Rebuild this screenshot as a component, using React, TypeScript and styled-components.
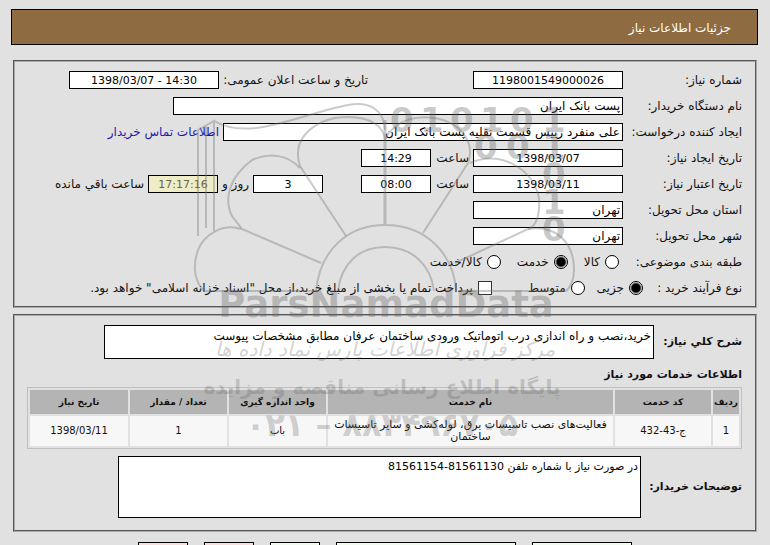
import React from "react";
import styled, { createGlobalStyle, css } from "styled-components";

const GlobalStyle = createGlobalStyle`
  *, *::before, *::after { box-sizing: border-box; }
  body { margin: 0; background: #e1e1e1; }
`;

const Page = styled.main`
  position: relative;
  height: 100vh;
  overflow: hidden;
  padding: 9px 12px 0 11px;
  background: #e1e1e1;
  color: #111;
  font: 12px/20px "DejaVu Sans", sans-serif;
`;

const TitleBar = styled.header`
  height: 36px;
  padding: 0 26px;
  border: 1px solid #000;
  background: #8e6b40;
  color: #fff;
  line-height: 36px;
`;

const Panel = styled.section<{ $gap: number; $bottom: number }>`
  margin: ${(p) => p.$gap}px 1px 0 2px;
  padding: 9px 13px ${(p) => p.$bottom}px 12px;
  border: 2px groove #aaa;
`;

const Rows = styled.div`
  display: flex;
  flex-direction: column;
  gap: 8px;
`;

const Row = styled.div`
  display: flex;
  align-items: center;
  height: 18px;
  gap: 4px;
  line-height: 22px;
  white-space: nowrap;
`;

const Label = styled.label`
  flex: 0 0 115px;
`;

const GroupLabel = styled.span<{ $width: number }>`
  flex: 0 0 ${(p) => p.$width}px;
`;

const Field = styled.input<{ $width: number; $number?: boolean; $muted?: boolean }>`
  width: ${(p) => p.$width}px;
  height: 18px;
  padding: 0 2px;
  border: 1px solid #000;
  border-radius: 0;
  background: #fff;
  color: #000;
  font: inherit;
  line-height: 16px;
  ${(p) => p.$number && css`
    font-size: 11px;
    text-align: center;
  `}
  ${(p) => p.$muted && css`
    background: #efecc8;
    color: #68664c;
  `}
`;

const Unit = styled.label<{ $width: number }>`
  flex: 0 0 ${(p) => p.$width}px;
`;

const Spacer = styled.span<{ $width: number }>`
  flex: 0 0 ${(p) => p.$width}px;
`;

const ContactLink = styled.a`
  color: #1a1aae;
  text-decoration: none;
`;

const Choice = styled.label<{ $after: number }>`
  display: flex;
  align-items: center;
  gap: 5px;
  margin-left: ${(p) => p.$after}px;
`;

const Radio = styled.input.attrs({ type: "radio" })`
  appearance: none;
  width: 14px;
  height: 14px;
  margin: 0;
  border: 1px solid #000;
  border-radius: 50%;
  background: #fff;
  &:checked { background: radial-gradient(circle, #000 4px, #fff 6px); }
`;

const Check = styled.input.attrs({ type: "checkbox" })`
  appearance: none;
  width: 14px;
  height: 14px;
  margin: 0;
  border: 1px solid #333;
  background: #fff;
  &:checked { background: #000; }
`;

const TextRow = styled.div<{ $end: number }>`
  display: flex;
  align-items: center;
  gap: 5px;
  padding-left: ${(p) => p.$end}px;
`;

const StrongLabel = styled.label<{ $width: number }>`
  flex: 0 0 ${(p) => p.$width}px;
  font-size: 11px;
  font-weight: bold;
  white-space: nowrap;
`;

const TextArea = styled.textarea<{ $height: number; $size: number }>`
  flex: 1;
  min-width: 0;
  height: ${(p) => p.$height}px;
  padding: 1px 2px;
  border: 1px solid #000;
  border-radius: 0;
  background: #fff;
  color: #000;
  font: inherit;
  font-size: ${(p) => p.$size}px;
  line-height: 18px;
  resize: none;
`;

const Heading = styled.h2`
  margin: 7px 0 3px;
  font-size: 11px;
  line-height: 18px;
`;

const Services = styled.table`
  width: 100%;
  margin-bottom: 7px;
  table-layout: fixed;
  border: 1px solid #c0c0c0;
  border-spacing: 2px;
  font-size: 10px;
  line-height: 12px;
  text-align: center;
  th, td { padding: 0; }
  th { height: 24px; background: #b4b4b4; color: #111; font-size: 9px; }
  td { height: 30px; background: #f7f7f7; }
  td:nth-child(3) { font-size: 11px; }
`;

const Col = styled.col<{ $width?: number }>`
  width: ${(p) => (p.$width ? `${p.$width}px` : "auto")};
`;

const Actions = styled.footer`
  display: flex;
  gap: 16px;
  margin: 10px 126px 0;
`;

const Action = styled.button<{ $width: number; $danger?: boolean }>`
  width: ${(p) => p.$width}px;
  height: 24px;
  padding: 0;
  border: 1px solid #000;
  background: ${(p) => (p.$danger ? "#fbdcdc" : "#effbe9")};
`;

const Watermark = styled.svg`
  position: absolute;
  top: 90px;
  left: 190px;
  width: 400px;
  height: 360px;
  pointer-events: none;
`;

function Mark() {
  return (
    <Watermark viewBox="0 0 400 360" aria-hidden="true" direction="ltr">
      <g fill="none" stroke="#777" strokeOpacity="0.38" strokeWidth="2">
        <path d="M8 146V40l16-9v110M16 138V36M24 31C60 52 110 24 158 15C180 11 194 20 195 40" />
        <path d="M195 30V134" strokeWidth="3" />
        <path d="M156 146L110 76C100 45 130 27 158 27C180 27 194 36 195 50" />
        <path d="M110 78C98 65 80 62 62 70C38 88 34 110 42 126L52 139L131 173" />
        <path d="M51 139C32 133 14 145 8 160C1 180 7 194 14 201H128" />
        <path d="M195 50C205 25 245 20 268 38C281 50 282 62 278 73L233 143" />
        <path d="M280 73C310 60 343 78 349 108C350 126 347 136 338 139L265 173" />
        <path d="M338 139C365 135 384 151 384 180C384 190 380 198 376 201H268" />
        <path d="M126 201C130 160 158 135 195 135C237 135 264 165 266 201" />
        <path d="M148 201C151 175 168 157 195 157C222 157 241 175 244 201" />
      </g>
      <g
        fill="#666"
        fillOpacity="0.34"
        fontFamily="DejaVu Sans, sans-serif"
        fontWeight="bold"
      >
        <g fontSize="34">
          <text x="200 230 260 290 320 352" y="42">010101</text>
          <text x="284 316 352" y="69">001</text>
          <text x="352" y="97">0</text>
          <text x="352" y="124">1</text>
          <text x="352" y="151">0</text>
        </g>
        <text x="196" y="227" fontSize="37" textAnchor="middle">ParsNamadData</text>
      </g>
      <g fill="#666" fillOpacity="0.3" textAnchor="middle" fontFamily="DejaVu Sans, sans-serif">
        <text x="195" y="266" direction="rtl" fontSize="20" fontStyle="italic">مرکز فرآوری اطلاعات پارس نماد داده ها</text>
        <text x="192" y="304" direction="rtl" fontSize="20" fontWeight="bold">پایگاه اطلاع رسانی مناقصه و مزایده</text>
        <text x="192" y="346" fontSize="32" fontWeight="bold">۰۲۱ – ۸۸۳۴۹۶۷۰۵</text>
      </g>
    </Watermark>
  );
}

const columns = ["رديف", "کد خدمت", "نام خدمت", "واحد اندازه گیری", "تعداد / مقدار", "تاریخ نیاز"];
const services = [
  ["1", "ج-43-432", "فعالیت‌های نصب تاسیسات برق، لوله‌کشی و سایر تاسیسات ساختمان", "باب", "1", "1398/03/11"],
];

export default function App() {
  return (
    <Page dir="rtl" lang="fa">
      <GlobalStyle />
      <TitleBar>جزئیات اطلاعات نیاز</TitleBar>

      <Panel $gap={15} $bottom={9}>
        <Rows>
          <Row>
            <Label htmlFor="number">شماره نیاز:</Label>
            <Field id="number" $width={150} $number readOnly value="1198001549000026" />
            <Spacer $width={97} />
            <Unit $width={145} htmlFor="announced">تاریخ و ساعت اعلان عمومی:</Unit>
            <Field id="announced" $width={150} $number dir="ltr" readOnly value="1398/03/07 - 14:30" />
          </Row>
          <Row>
            <Label htmlFor="buyer">نام دستگاه خریدار:</Label>
            <Field id="buyer" $width={450} readOnly value="پست بانک ایران" />
          </Row>
          <Row>
            <Label htmlFor="creator">ایجاد کننده درخواست:</Label>
            <Field id="creator" $width={400} readOnly value="علی منفرد رییس قسمت نقلیه پست بانک ایران" />
            <ContactLink href="#contact">اطلاعات تماس خریدار</ContactLink>
          </Row>
          <Row>
            <Label htmlFor="created">تاریخ ایجاد نیاز:</Label>
            <Field id="created" $width={150} $number readOnly value="1398/03/07" />
            <Unit $width={34} htmlFor="created-time">ساعت</Unit>
            <Field id="created-time" $width={70} $number readOnly value="14:29" />
          </Row>
          <Row>
            <Label htmlFor="valid">تاریخ اعتبار نیاز:</Label>
            <Field id="valid" $width={150} $number readOnly value="1398/03/11" />
            <Unit $width={34} htmlFor="valid-time">ساعت</Unit>
            <Field id="valid-time" $width={70} $number readOnly value="08:00" />
            <Spacer $width={30} />
            <Field id="days" $width={70} $number readOnly value="3" />
            <Unit $width={26} htmlFor="days">روز و</Unit>
            <Field id="left" $width={70} $number $muted readOnly value="17:17:16" />
            <label htmlFor="left">ساعت باقي مانده</label>
          </Row>
          <Row>
            <Label htmlFor="province">استان محل تحویل:</Label>
            <Field id="province" $width={150} readOnly value="تهران" />
          </Row>
          <Row>
            <Label htmlFor="city">شهر محل تحویل:</Label>
            <Field id="city" $width={150} readOnly value="تهران" />
          </Row>
          <Row role="radiogroup" aria-labelledby="category">
            <GroupLabel $width={119} id="category">طبقه بندی موضوعی:</GroupLabel>
            <Choice $after={12}><Radio name="category" />کالا</Choice>
            <Choice $after={12}><Radio name="category" defaultChecked />خدمت</Choice>
            <Choice $after={0}><Radio name="category" />کالا/خدمت</Choice>
          </Row>
          <Row role="radiogroup" aria-labelledby="process">
            <GroupLabel $width={95} id="process">نوع فرآیند خرید :</GroupLabel>
            <Choice $after={8}><Radio name="process" defaultChecked />جزیی</Choice>
            <Choice $after={32}><Radio name="process" />متوسط</Choice>
            <Choice $after={0}><Check />پرداخت تمام یا بخشی از مبلغ خرید،از محل "اسناد خزانه اسلامی" خواهد بود.</Choice>
          </Row>
        </Rows>
      </Panel>

      <Panel $gap={6} $bottom={12}>
        <TextRow $end={77}>
          <StrongLabel $width={83} htmlFor="summary">شرح کلي نیاز:</StrongLabel>
          <TextArea id="summary" $height={34} $size={12} readOnly value="خرید،نصب و راه اندازی درب اتوماتیک ورودی ساختمان عرفان مطابق مشخصات پیوست" />
        </TextRow>
        <Heading>اطلاعات خدمات مورد نیاز</Heading>
        <Services>
          <colgroup>
            <Col $width={26} /><Col $width={96} /><Col /><Col $width={97} /><Col $width={97} /><Col $width={98} />
          </colgroup>
          <thead>
            <tr>{columns.map((c) => <th key={c} scope="col">{c}</th>)}</tr>
          </thead>
          <tbody>
            {services.map((r) => <tr key={r[0]}>{r.map((v, i) => <td key={i}>{v}</td>)}</tr>)}
          </tbody>
        </Services>
        <TextRow $end={91}>
          <StrongLabel $width={96} htmlFor="notes">توضیحات خریدار:</StrongLabel>
          <TextArea id="notes" $height={62} $size={11} readOnly value="در صورت نیاز با شماره تلفن 81561130-81561154" />
        </TextRow>
      </Panel>

      <Actions>
        <Action $width={100} />
        <Action $width={180} />
        <Action $width={50} />
        <Action $width={50} $danger />
        <Action $width={50} $danger />
      </Actions>
      <Mark />
    </Page>
  );
}
